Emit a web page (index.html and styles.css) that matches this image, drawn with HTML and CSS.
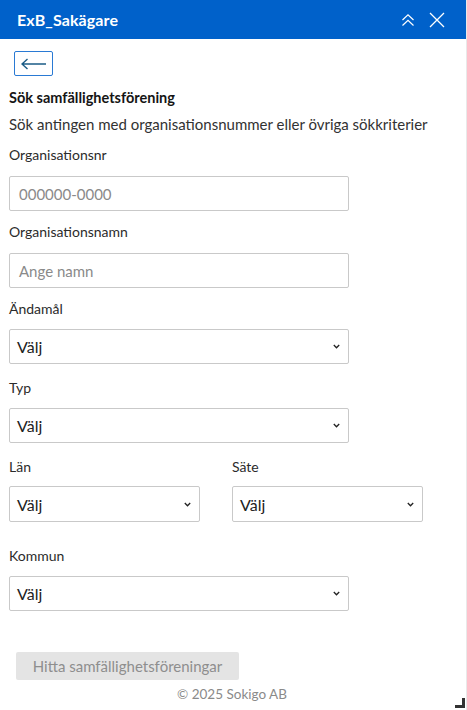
FILE: index.html
```html
<!DOCTYPE html>
<html lang="sv">
<head>
<meta charset="utf-8">
<title>ExB_Sakägare</title>
<link rel="stylesheet" href="styles.css">
</head>
<body>
<div class="panel">
  <header class="header">
    <span class="title">ExB_Sakägare</span>
    <div class="actions">
      <svg class="icon" width="16" height="16" viewBox="0 0 16 16"><path d="M2.5 8 L8 2.8 L13.5 8 M2.5 13.5 L8 8.3 L13.5 13.5" fill="none" stroke="#fff" stroke-width="1.2"/></svg>
      <svg class="icon" width="16" height="16" viewBox="0 0 16 16"><path d="M1 1 L15 15 M15 1 L1 15" fill="none" stroke="#fff" stroke-width="1.3"/></svg>
    </div>
  </header>
  <main class="content">
    <button class="back" type="button" aria-label="Tillbaka">
      <svg width="26" height="12" viewBox="0 0 26 12"><path d="M1 6 H25 M6.5 1 L1 6 L6.5 11" fill="none" stroke="#1b5c86" stroke-width="1.4"/></svg>
    </button>
    <h1 class="heading">Sök samfällighetsförening</h1>
    <p class="subtitle">Sök antingen med organisationsnummer eller övriga sökkriterier</p>

    <div class="field f1">
      <label class="label">Organisationsnr</label>
      <div class="input placeholder">000000-0000</div>
    </div>
    <div class="field f2">
      <label class="label">Organisationsnamn</label>
      <div class="input placeholder">Ange namn</div>
    </div>
    <div class="field f3">
      <label class="label">Ändamål</label>
      <div class="input select"><span>Välj</span><svg width="7" height="5" viewBox="0 0 7 5"><path d="M0.8 1 L3.5 3.8 L6.2 1" fill="none" stroke="#222" stroke-width="1.3"/></svg></div>
    </div>
    <div class="field f4">
      <label class="label">Typ</label>
      <div class="input select"><span>Välj</span><svg width="7" height="5" viewBox="0 0 7 5"><path d="M0.8 1 L3.5 3.8 L6.2 1" fill="none" stroke="#222" stroke-width="1.3"/></svg></div>
    </div>
    <div class="row f5">
      <div class="field half">
        <label class="label">Län</label>
        <div class="input select tall"><span>Välj</span><svg width="7" height="5" viewBox="0 0 7 5"><path d="M0.8 1 L3.5 3.8 L6.2 1" fill="none" stroke="#222" stroke-width="1.3"/></svg></div>
      </div>
      <div class="field half">
        <label class="label">Säte</label>
        <div class="input select tall"><span>Välj</span><svg width="7" height="5" viewBox="0 0 7 5"><path d="M0.8 1 L3.5 3.8 L6.2 1" fill="none" stroke="#222" stroke-width="1.3"/></svg></div>
      </div>
    </div>
    <div class="field f6">
      <label class="label">Kommun</label>
      <div class="input select"><span>Välj</span><svg width="7" height="5" viewBox="0 0 7 5"><path d="M0.8 1 L3.5 3.8 L6.2 1" fill="none" stroke="#222" stroke-width="1.3"/></svg></div>
    </div>

    <button class="submit" type="button" disabled>Hitta samfällighetsföreningar</button>
    <footer class="footer">© 2025 Sokigo AB</footer>
  </main>
  <div class="resize"></div>
</div>
</body>
</html>
```

FILE: styles.css
```css
* { box-sizing: border-box; }
html, body { margin: 0; padding: 0; background: #fff; }
body {
  font-family: Lato, "Noto Sans", sans-serif;
  color: #323232;
  width: 467px;
  height: 710px;
  overflow: hidden;
}
.panel {
  position: relative;
  width: 467px;
  height: 710px;
  border-right: 1px solid #e9e9e9;
}
.header {
  height: 39px;
  background: #0061ca;
  display: flex;
  align-items: center;
  justify-content: space-between;
  padding: 0 21px 0 17px;
}
.title {
  color: #fff;
  font-weight: 700;
  font-size: 16px;
  letter-spacing: 0.1px;
}
.actions { display: flex; gap: 13px; align-items: center; }
.icon { display: block; }
.content { padding: 0 0 0 9px; }
.back {
  margin: 12px 0 0 5px;
  width: 39px;
  height: 25px;
  border: 1px solid #2a7ad4;
  border-radius: 2px;
  background: #fff;
  display: flex;
  align-items: center;
  justify-content: center;
  padding: 0;
}
.back svg { display: block; }
.heading {
  margin: 12px 0 0;
  font-size: 14.5px;
  font-weight: 700;
  line-height: 20px;
  color: #151515;
}
.subtitle {
  margin: 6px 0 0;
  font-size: 15px;
  line-height: 20px;
  color: #323232;
}
.field { display: flex; flex-direction: column; }
.label {
  font-size: 14px;
  line-height: 20px;
  margin-bottom: 11px;
  color: #2b2b2b;
}
.input {
  width: 340px;
  height: 35px;
  border: 1px solid #c9c9c9;
  border-radius: 2px;
  display: flex;
  align-items: center;
  padding: 0 8px 0 7px;
  font-size: 16px;
  color: #222;
}
.placeholder { color: #8a8a8a; font-size: 15px; padding-left: 9px; }
.select { justify-content: space-between; }
.select span { font-size: 16px; }
.select svg { display: block; }
.tall { height: 36px; }
.f1 { margin-top: 11px; }
.f2 { margin-top: 11px; }
.f3 { margin-top: 11px; }
.f4 { margin-top: 14px; }
.f5 { margin-top: 14px; }
.f6 { margin-top: 24px; }
.f3 .label, .f4 .label, .f6 .label { margin-bottom: 10px; }
.row { display: flex; gap: 32px; }
.half .input { width: 191px; }
.half .label { margin-bottom: 9px; }
.submit {
  margin: 41px 0 0 7px;
  width: 223px;
  height: 28px;
  border: none;
  border-radius: 2px;
  background: #e4e4e4;
  color: #8e8e8e;
  font-family: inherit;
  font-size: 15px;
  padding: 0;
}
.footer {
  margin-top: 4px;
  text-align: center;
  width: 446px;
  font-size: 13.5px;
  line-height: 20px;
  color: #8a8a8a;
}
.resize {
  position: absolute;
  right: 1px;
  bottom: 2px;
  width: 10px;
  height: 10px;
  border-right: 3px solid #333;
  border-bottom: 3px solid #333;
}
```
